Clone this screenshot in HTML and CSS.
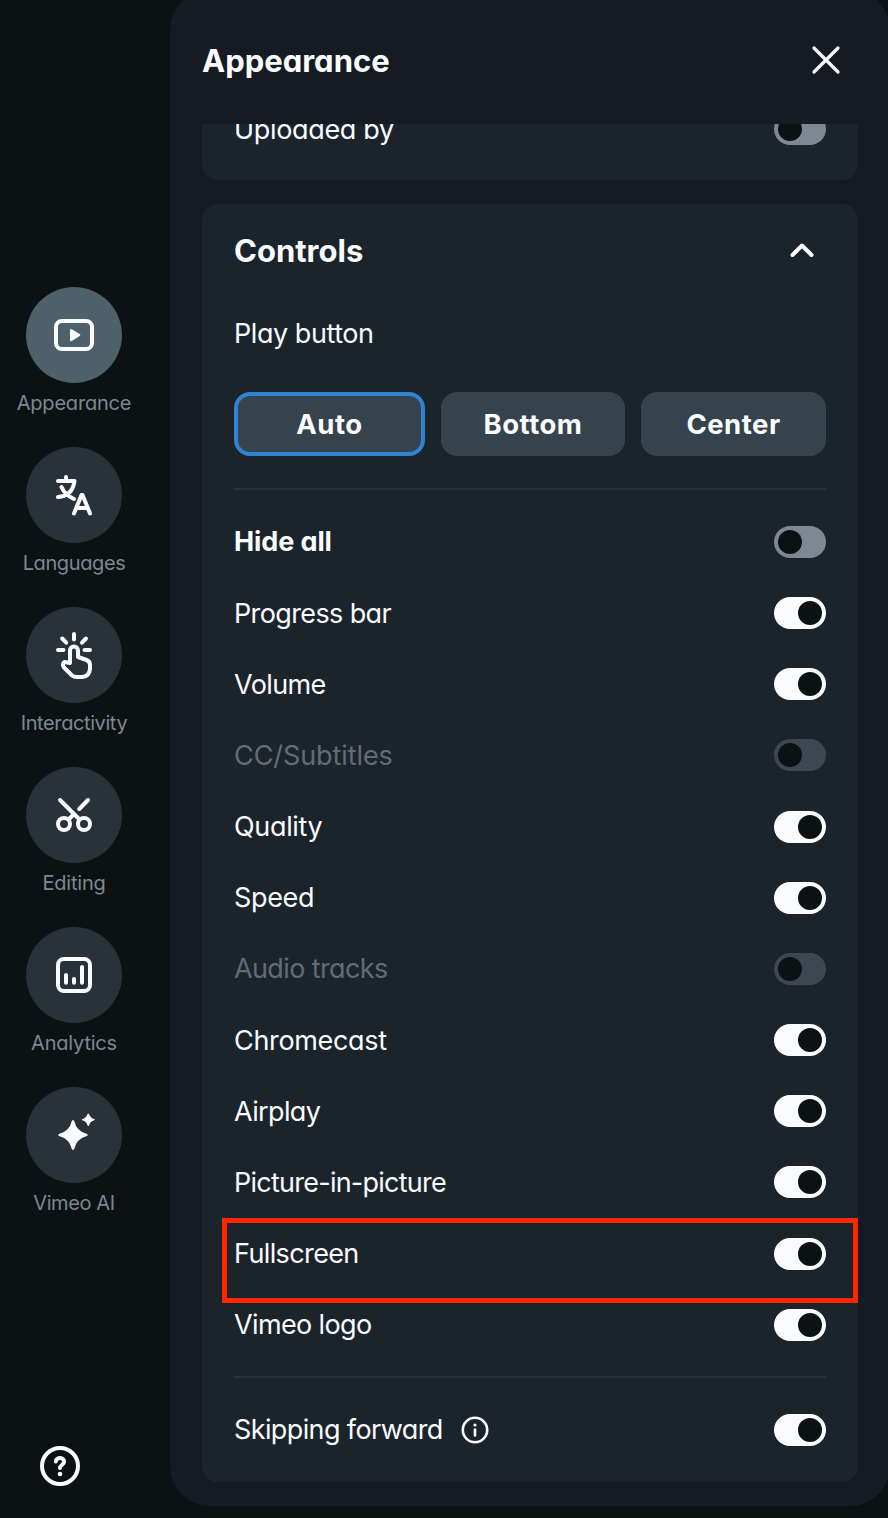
FILE: index.html
```
<!DOCTYPE html>
<html lang="en">
<head>
<meta charset="utf-8">
<title>Appearance</title>
<link rel="stylesheet" href="styles.css">
</head>
<body>
<div class="app">
  <nav class="rail">
    <div class="rail-items">
      <a class="rail-item active"><span class="disc"><svg viewBox="0 0 96 96"><rect x="30" y="34" width="36" height="28" rx="6"/><path class="solid" d="M44 43.400q0-2.200 1.900-1.100l7.700 4.600q1.700 1.100 0 2.200l-7.700 4.800q-1.900 1.100-1.900-1.100z"/></svg></span><span class="rail-label">Appearance</span></a>
      <a class="rail-item"><span class="disc"><svg viewBox="0 0 96 96"><path d="M40 30v4M32 34h16.500Q46.500 49 32 50M35.500 40Q39 48 48 52M48 66.500L55.500 48h1L64 66.500M51.500 61h9.500"/></svg></span><span class="rail-label snug">Languages</span></a>
      <a class="rail-item"><span class="disc"><svg viewBox="0 0 96 96"><path d="M48 27v5.500M36.200 31.500l4 4.200M60 31.500l-4 4.200M32 43h5.500M58.500 43H64M44 56V43.500a4 4 0 0 1 8 0V50l8.500 3Q64 54.300 64 58v4q-.6 7.500-8 8h-5q-3 0-5-1.500L38 60.500q-2.500-3.500.5-5.500z"/></svg></span><span class="rail-label snug">Interactivity</span></a>
      <a class="rail-item"><span class="disc"><svg viewBox="0 0 96 96"><circle cx="38" cy="57" r="6"/><circle cx="58" cy="57" r="6"/><path d="M34 33l19.500 19.500M62 33l-8.800 9M47.500 47.500l-5 5"/></svg></span><span class="rail-label">Editing</span></a>
      <a class="rail-item"><span class="disc"><svg viewBox="0 0 96 96"><rect x="32" y="32" width="32" height="32" rx="6"/><path d="M40 48v7.700M48 52v3.700M56 40v15.700"/></svg></span><span class="rail-label">Analytics</span></a>
      <a class="rail-item"><span class="disc"><svg viewBox="0 0 96 96"><path class="solid" d="M45.800 34q1.200-1.800 2.400 0Q50.500 44.300 61 47q1.800 1 0 2-10.500 2.700-12.800 13-1.200 1.800-2.400 0Q43.500 51.700 33 49q-1.800-1 0-2 10.500-2.700 12.800-13zM61.600 27q.7-1 1.400 0 1.300 4.100 5.300 5.100 1 .6 0 1.200-4 1-5.300 5.100-.7 1-1.400 0-1.300-4.100-5.300-5.100-1-.6 0-1.200 4-1 5.300-5.100z"/></svg></span><span class="rail-label snug">Vimeo AI</span></a>
    </div>
    <svg class="help" viewBox="0 0 40 40"><circle cx="20" cy="20" r="18"/><path d="M15.800 15.500c.3-5 8.500-4.600 8.300.2-.1 3.400-4.100 3.200-4.100 6.200"/><circle class="solid" cx="20" cy="28" r="2.300"/></svg>
  </nav>

  <main class="panel">
    <header class="panel-head">
      <h1>Appearance</h1>
      <svg class="close" viewBox="0 0 32 32"><path d="M4 4l24 24M28 4L4 28"/></svg>
    </header>
    <div class="scroll">
      <section class="card card-prev">
        <div class="row"><span class="loose">Uploaded by</span><i class="toggle off"></i></div>
      </section>
      <section class="card card-controls">
        <div class="card-head"><h2>Controls</h2><svg class="chevron" viewBox="0 0 32 32"><path d="M6.500 21L16 11.500l9.500 9.500"/></svg></div>
        <div class="sub">Play button</div>
        <div class="choices">
          <button class="choice auto selected">Auto</button>
          <button class="choice bottom">Bottom</button>
          <button class="choice center">Center</button>
        </div>
        <hr>
        <div class="rows">
          <div class="row"><b>Hide all</b><i class="toggle off"></i></div>
          <div class="row"><span>Progress bar</span><i class="toggle"></i></div>
          <div class="row"><span>Volume</span><i class="toggle"></i></div>
          <div class="row disabled"><span class="wide">CC/Subtitles</span><i class="toggle off"></i></div>
          <div class="row"><span class="loose">Quality</span><i class="toggle"></i></div>
          <div class="row"><span class="loose">Speed</span><i class="toggle"></i></div>
          <div class="row disabled"><span>Audio tracks</span><i class="toggle off"></i></div>
          <div class="row"><span class="loose">Chromecast</span><i class="toggle"></i></div>
          <div class="row"><span>Airplay</span><i class="toggle"></i></div>
          <div class="row"><span class="tight">Picture-in-picture</span><i class="toggle"></i></div>
          <div class="row marked"><span>Fullscreen</span><i class="toggle"></i></div>
          <div class="row"><span>Vimeo logo</span><i class="toggle"></i></div>
        </div>
        <hr>
        <div class="row last"><span>Skipping forward</span><svg class="info" viewBox="0 0 28 28"><circle cx="14" cy="14" r="12.200"/><path d="M14 13.500v6"/><circle class="solid" cx="14" cy="9" r="1.600"/></svg><i class="toggle"></i></div>
      </section>
    </div>
  </main>
</div>
</body>
</html>
```
FILE: styles.css
```
*, *::before, *::after { box-sizing: border-box; }
body {
  margin: 0;
  background: #0c1214;
  color: #fafbfe;
  font-family: Inter, "Liberation Sans", sans-serif;
  font-feature-settings: "cv11" 1;
}
h1, h2 { margin: 0; padding-top: 1px; font-size: 31px; font-weight: 650; line-height: 40px; }
h1 { letter-spacing: 0; }
h2 { letter-spacing: 0; }
svg { fill: none; stroke: #fafbfe; stroke-linecap: round; stroke-linejoin: round; flex: none; }
svg .solid { fill: #fafbfe; stroke: none; }

.app { display: flex; height: 1518px; overflow: hidden; }

.rail {
  flex: none;
  width: 170px;
  padding: 287px 0 32px;
  display: flex;
  flex-direction: column;
  justify-content: space-between;
}
.rail-items { width: 148px; display: flex; flex-direction: column; }
.rail-item { height: 160px; display: flex; flex-direction: column; align-items: center; }
.disc { width: 96px; height: 96px; border-radius: 50%; background: #2a3239; }
.active .disc { background: #4e606a; }
.disc svg { display: block; width: 96px; height: 96px; stroke-width: 4; }
.rail-label { margin-top: 8px; font-size: 20px; line-height: 24px; letter-spacing: -0.2px; color: #7e8792; white-space: nowrap; }
.rail-label.snug { letter-spacing: -0.4px; }
.help { width: 40px; height: 40px; margin-left: 40px; stroke-width: 4; }

.panel {
  flex: none;
  width: 720px;
  height: 1516px;
  margin-top: -10px;
  padding: 10px 32px 24px;
  border-radius: 40px;
  background: #161b23;
}
.panel-head { height: 124px; padding: 0 16px 4px 0; display: flex; align-items: center; justify-content: space-between; }
.close { width: 32px; height: 32px; stroke-width: 3.200; }
.scroll { height: 1358px; overflow: hidden; }

.card { width: 656px; padding: 0 32px; border-radius: 16px; background: #1c242b; }
.card-prev { height: 136px; margin-top: -80px; margin-bottom: 24px; padding-top: 49.5px; }
.card-controls { height: 1278px; }
.card-head { height: 92px; padding-right: 8px; display: flex; align-items: center; justify-content: space-between; }
.chevron { width: 32px; height: 32px; stroke-width: 4; }
.sub { height: 96px; padding-top: 17.500px; font-size: 27px; font-weight: 430; line-height: 40px; letter-spacing: -0.45px; }

.choices { display: flex; gap: 16px; }
.choice {
  width: 184px;
  height: 64px;
  padding: 0;
  border: 0;
  border-radius: 16px;
  background: #36434c;
  color: #fafbfe;
  font: 650 27.5px/56px Inter, "Liberation Sans", sans-serif;
  font-feature-settings: inherit;
  letter-spacing: 0.5px;
}
.choice.selected { width: 191px; border: 4px solid #2f83d3; }
.choice.center { width: 185px; }

hr { height: 2px; margin: 32px 0 16.45px; border: 0; background: #29303b; }
.rows { height: 853.8px; display: grid; grid-template-rows: repeat(12, 1fr); }
.row { position: relative; display: flex; align-items: center; font-size: 27px; font-weight: 430; line-height: 40px; letter-spacing: -0.62px; }
.row span { padding-top: 1px; }
.card-prev .row { height: 71px; }
.row b { font-weight: 650; letter-spacing: -0.1px; }
.row .loose { letter-spacing: -0.33px; }
.row .wide { letter-spacing: -0.08px; }
.row .tight { letter-spacing: -0.75px; }
.row.last { height: 72px; }
.rows + hr { margin: 15.75px 0 16px; }
.info { width: 28px; height: 28px; margin-left: 18px; stroke-width: 2.600; }

.toggle { width: 52px; height: 32px; margin-left: auto; padding: 4px; border-radius: 16px; background: #fafbfe; display: flex; justify-content: flex-end; }
.toggle::before { content: ""; width: 24px; height: 24px; border-radius: 50%; background: #0c1214; }
.toggle.off { background: #7e8792; justify-content: flex-start; }
.disabled { color: #646b74; }
.disabled .toggle { background: #3e4751; }

.marked::after {
  content: "";
  position: absolute;
  left: -12px;
  right: -32px;
  top: 0;
  height: 85px;
  border: 5px solid #ff2600;
}
```
